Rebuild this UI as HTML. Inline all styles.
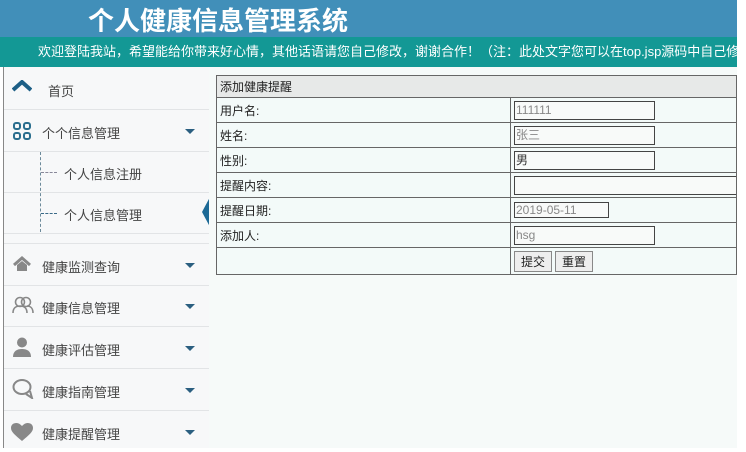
<!DOCTYPE html>
<html><head><meta charset="utf-8"><style>
body{margin:0;width:746px;height:448px;overflow:hidden;background:#fff;font-family:"Liberation Sans","Noto Sans CJK SC",sans-serif;position:relative}
.hdr{position:absolute;left:0;top:0;width:737px;height:37px;background:#418fb9}
.hdr h1{margin:0;position:absolute;left:88px;top:1px;font-size:26px;color:#fff;font-weight:bold;letter-spacing:0px}
.bar{position:absolute;left:0;top:37px;width:737px;height:30px;background:#139895;color:#fff;font-size:13px;line-height:30px;white-space:nowrap;overflow:hidden}
.bar span{margin-left:38px}
.side{position:absolute;left:3px;top:67px;width:205px;height:381px;background:#f7f8f9;border-left:1px solid #888;border-right:1px solid #e0e3e5}
.it{position:absolute;left:0;width:205px;border-bottom:1px solid #e2e4e6;font-size:13px;color:#444}
.it .t{position:absolute;left:38px}
.ar{position:absolute;right:14px;width:0;height:0;border-left:5px solid transparent;border-right:5px solid transparent;border-top:5px solid #2b5f80}
.main{position:absolute;left:209px;top:67px;width:528px;height:381px;background:#f6faf9}
table{position:absolute;left:7px;top:8px;width:521px;border-collapse:collapse;font-size:12px;color:#222;table-layout:fixed}
td{border:1px solid #666;padding:0 3px;height:24px;background:#f3faf9;overflow:hidden;white-space:nowrap}
td.h{background:#e7e9e8;height:21px}
.in{display:inline-block;width:138px;height:17px;border:1px solid #444;background:#f8faf9;color:#888;font-size:12px;line-height:17px;padding-left:1px;vertical-align:middle}
.btn{display:inline-block;border:1px solid #888;background:#eee;padding:1px 6px;font-size:12px;margin-right:3px}
</style></head><body>
<div class="hdr"><h1>个人健康信息管理系统</h1></div>
<div class="bar"><span>欢迎登陆我站，希望能给你带来好心情，其他话语请您自己修改，谢谢合作！（注：此处文字您可以在top.jsp源码中自己修改）</span></div>
<div class="side">
<div class="it" style="top:0;height:42px"><svg style="position:absolute;left:8px;top:13px" width="20" height="14" viewBox="0 0 20 14"><path d="M1 10 L10 2 L19 10" stroke="#1d5f86" stroke-width="4" fill="none"/></svg><span class="t" style="left:44px;top:14px">首页</span></div>
<div class="it" style="top:43px;height:41px"><svg style="position:absolute;left:9px;top:12px" width="18" height="18" viewBox="0 0 18 18" fill="none" stroke="#2a6e8e" stroke-width="2"><rect x="1" y="1" width="6" height="6" rx="2"/><rect x="11" y="1" width="6" height="6" rx="2"/><rect x="1" y="11" width="6" height="6" rx="2"/><rect x="11" y="11" width="6" height="6" rx="2"/></svg><span class="t" style="top:13px">个个信息管理</span><div class="ar" style="top:19px"></div></div>
<div class="it" style="top:85px;height:40px;border-left:0"><div style="position:absolute;left:36px;top:0;height:80px;border-left:1px dashed #6c8a9a"></div><div style="position:absolute;left:37px;top:20px;width:16px;border-top:1px dashed #889"></div><span class="t" style="left:60px;top:12px">个人信息注册</span></div>
<div class="it" style="top:126px;height:40px"><div style="position:absolute;left:37px;top:20px;width:16px;border-top:1px dashed #3a6a88"></div><span class="t" style="left:60px;top:12px">个人信息管理</span><div style="position:absolute;right:-1px;top:4px;width:0;height:0;border-top:15px solid transparent;border-bottom:15px solid transparent;border-right:8px solid #1d6a96"></div></div>
<div class="it" style="top:176px;height:41px;border-top:1px solid #e2e4e6"><svg style="position:absolute;left:8px;top:12px" width="20" height="16" viewBox="0 0 20 16"><path d="M2 9 L10 2 L18 9" stroke="#888" stroke-width="3" fill="none"/><path d="M5 9 L10 5 L15 9 V15 H5Z" fill="#888"/></svg><span class="t" style="top:13px">健康监测查询</span><div class="ar" style="top:19px"></div></div>
<div class="it" style="top:218px;height:41px"><svg style="position:absolute;left:8px;top:11px" width="22" height="18" viewBox="0 0 22 18" fill="none" stroke="#888" stroke-width="1.6"><circle cx="8" cy="6" r="4.5"/><path d="M1 17c0-5 3-7 7-7s7 2 7 7"/><circle cx="14" cy="6" r="4.5"/><path d="M15 10c4 0 6 3 6 7"/></svg><span class="t" style="top:13px">健康信息管理</span><div class="ar" style="top:19px"></div></div>
<div class="it" style="top:260px;height:41px"><svg style="position:absolute;left:9px;top:10px" width="18" height="20" viewBox="0 0 18 20" fill="#888"><circle cx="9" cy="5.5" r="5"/><path d="M0 20c0-6 4-8 9-8s9 2 9 8z"/></svg><span class="t" style="top:13px">健康评估管理</span><div class="ar" style="top:19px"></div></div>
<div class="it" style="top:302px;height:41px"><svg style="position:absolute;left:8px;top:10px" width="22" height="20" viewBox="0 0 22 20" fill="none" stroke="#888" stroke-width="2"><ellipse cx="10" cy="8" rx="8.5" ry="7"/><path d="M14 15 L20 19 L18 12"/></svg><span class="t" style="top:13px">健康指南管理</span><div class="ar" style="top:19px"></div></div>
<div class="it" style="top:344px;height:41px;border:0"><svg style="position:absolute;left:7px;top:12px" width="22" height="18" viewBox="0 0 22 18"><path d="M11 18 C4 12 0 9 0 5 C0 2 2 0 5.5 0 C8 0 10 2 11 3 C12 2 14 0 16.5 0 C20 0 22 2 22 5 C22 9 18 12 11 18Z" fill="#888"/></svg><span class="t" style="top:13px">健康提醒管理</span><div class="ar" style="top:19px"></div></div>
</div>
<div class="main">
<table>
<colgroup><col style="width:294px"><col></colgroup>
<tr><td class="h" colspan="2">添加健康提醒</td></tr>
<tr><td>用户名:</td><td><span class="in">111111</span></td></tr>
<tr><td>姓名:</td><td><span class="in">张三</span></td></tr>
<tr><td>性别:</td><td><span class="in" style="color:#333">男</span></td></tr>
<tr><td>提醒内容:</td><td><span class="in" style="width:230px"></span></td></tr>
<tr><td style="height:21px">提醒日期:</td><td><span class="in" style="width:92px;height:14px;line-height:14px">2019-05-11</span></td></tr>
<tr><td>添加人:</td><td><span class="in">hsg</span></td></tr>
<tr><td style="height:26px"></td><td><span class="btn">提交</span><span class="btn">重置</span></td></tr>
</table>
</div>
</body></html>
